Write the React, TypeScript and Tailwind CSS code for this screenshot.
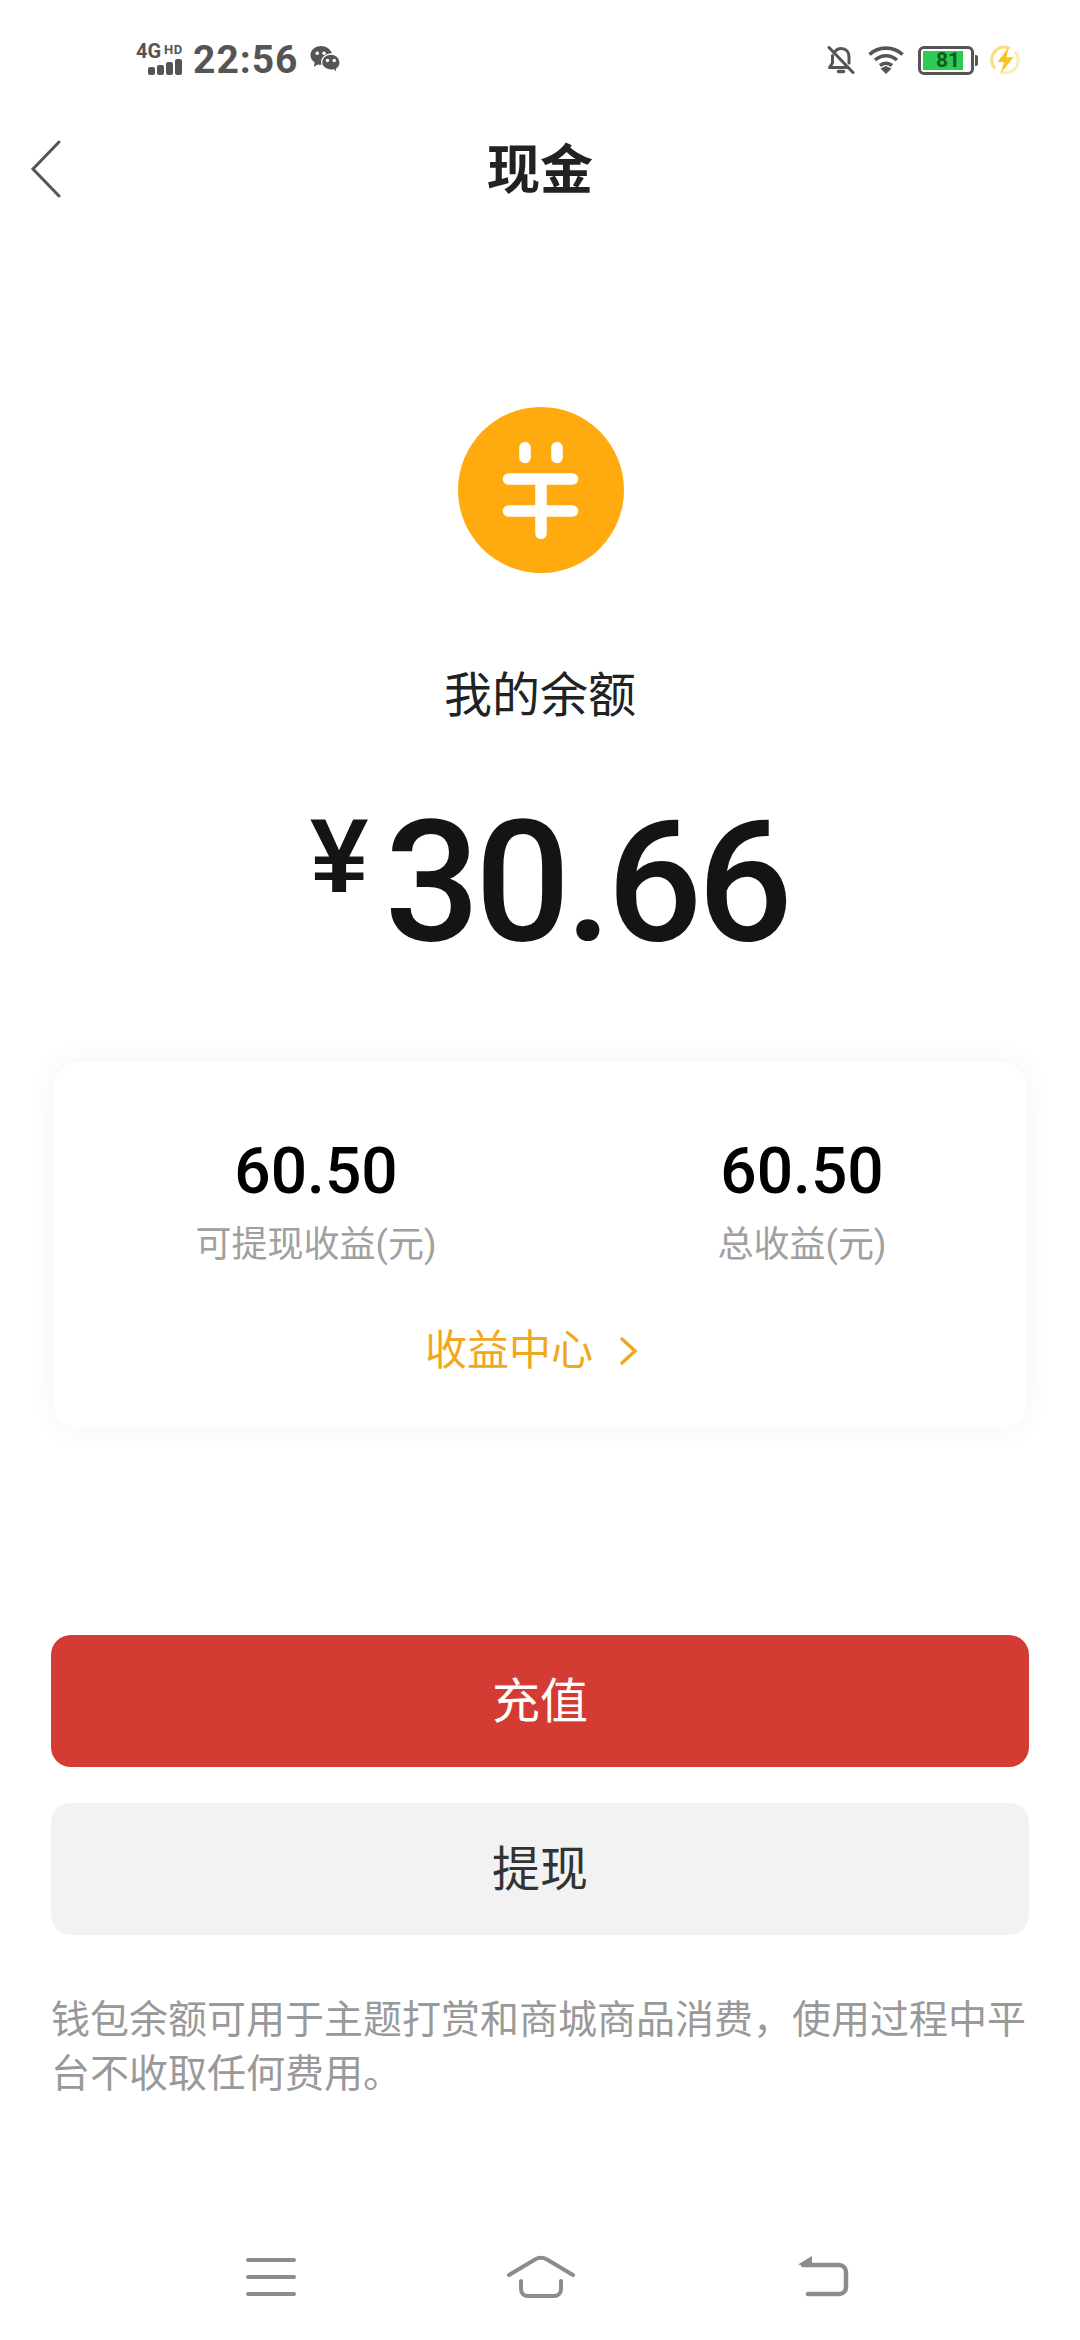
import React from "react";

const Wechat = () => (
  <svg width="32" height="31" viewBox="0 0 32 32" fill="#555">
    <path d="M12 1C5.800 1 1 5.200 1 10.500c0 3 1.700 5.600 4.300 7.400L4.500 22.500l4.200-2.400c1 .3 2.100.4 3.300.4.400 0 .8 0 1.200-.1-.3-.9-.5-1.800-.5-2.700 0-5 4.500-8.800 10-8.800h.7C21.500 4 17.100 1 12 1z" />
    <path d="M22 9.500c-5.200 0-9.500 3.600-9.500 8.200s4.300 8.200 9.500 8.200c1 0 1.900-.1 2.700-.4L28.500 29l-.7-4.300c2.300-1.500 3.700-4 3.700-7 0-4.600-4.300-8.200-9.500-8.200z" stroke="#fff" strokeWidth="1.200" />
    <circle cx="8" cy="8.500" r="1.800" fill="#fff" />
    <circle cx="15" cy="8.500" r="1.800" fill="#fff" />
    <circle cx="18.500" cy="16" r="1.800" fill="#fff" />
    <circle cx="25.500" cy="16" r="1.800" fill="#fff" />
  </svg>
);

const BellOff = () => (
  <svg width="28" height="28" viewBox="0 0 28 28" fill="none" stroke="#555" strokeWidth="3" strokeLinecap="round" strokeLinejoin="round">
    <path d="M8.500 5C10 3.200 11.800 2.500 14 2.500c5 0 8 3.500 8 8.500v6" />
    <path d="M5.500 9.500V17L2.500 21.500H20" />
    <path d="M2 1.500L26 26.500" />
    <path d="M11.500 25.500h5" strokeWidth="3.500" />
  </svg>
);

const Wifi = () => (
  <svg width="36" height="28" viewBox="0 0 36 28" fill="none" stroke="#555" strokeWidth="3.600">
    <path d="M1.500 8.500C10.500 0 25.500 0 34.500 8.500" />
    <path d="M7 14C13.500 8.300 22.500 8.300 29 14" />
    <path d="M12 19.500c3.500-2.900 8.500-2.900 12 0" />
    <path d="M12.500 22.500L18 20l5.500 2.500L18 28z" fill="#555" stroke="none" />
  </svg>
);

const Bolt = () => (
  <svg width="30" height="30" viewBox="0 0 32 32" fill="none">
    <path d="M21 3.500A13.500 13.500 0 0 0 5.500 25" stroke="#fbdf88" strokeWidth="3.500" />
    <path d="M11 28.500A13.500 13.500 0 0 0 26.500 7" stroke="#fdeeb8" strokeWidth="3.500" />
    <path d="M20 2L8 18h7l-3.500 12L25 13h-7.500z" fill="#fac31e" />
  </svg>
);

export default function App() {
  return (
    <div className="flex h-[2340px] w-[1080px] flex-col overflow-hidden bg-white font-['Roboto','Noto_Sans_CJK_SC',sans-serif]">
      {/* status bar */}
      <div className="flex h-[120px] items-center justify-between pl-[136px] pr-[60px]">
        <div className="flex items-center text-[#555]">
          <div className="flex h-[32px] w-[48px] flex-col">
            <div className="flex items-start text-[20px] font-bold leading-[15px]">
              <span>4G</span>
              <span className="ml-[3px] text-[13px] leading-[11px] tracking-[0.500px]">HD</span>
            </div>
            <div className="ml-[12px] flex items-end gap-[2px]">
              <span className="h-[8px] w-[7px] rounded-[2px] bg-[#555]" />
              <span className="h-[10px] w-[7px] rounded-[2px] bg-[#555]" />
              <span className="h-[13px] w-[7px] rounded-[2px] bg-[#555]" />
              <span className="h-[16px] w-[7px] rounded-[2px] bg-[#555]" />
            </div>
          </div>
          <span className="ml-[9px] text-[39px] font-bold leading-[48px] tracking-[1px]">22:56</span>
          <span className="ml-[10px] flex"><Wechat /></span>
        </div>
        <div className="flex items-center">
          <BellOff />
          <span className="ml-[13px] flex"><Wifi /></span>
          <span className="ml-[14px] flex items-center">
            <span className="flex h-[29px] w-[56px] items-stretch rounded-[6px] border-[3px] border-[#555] p-[2px]">
              <span className="flex w-[40px] items-center justify-end bg-[#2dcb51] pr-[3px] text-[21px] font-bold leading-none text-[#14591f]">81</span>
            </span>
            <span className="ml-[1px] h-[11px] w-[3px] rounded-r-[2px] bg-[#555]" />
          </span>
          <span className="ml-[12px] flex"><Bolt /></span>
        </div>
      </div>

      {/* header */}
      <div className="relative flex h-[100px] items-center justify-center pt-[2px]">
        <svg className="absolute left-[30px] top-[20px]" width="32" height="58" viewBox="0 0 32 58" fill="none" stroke="#555" strokeWidth="3" strokeLinecap="round">
          <path d="M29 2L3 29l26 27" />
        </svg>
        <span className="text-[53px] font-bold leading-[60px] text-[#222]">现金</span>
      </div>

      {/* coin */}
      <div className="ml-[2px] mt-[187px] flex justify-center">
        <div className="flex h-[166px] w-[166px] items-center justify-center rounded-full bg-[#ffab0f]">
          <svg width="86" height="106" viewBox="0 0 86 106" fill="none" stroke="#fff" strokeWidth="11.500" strokeLinecap="round">
            <path d="M27 10.500v10M59 10.500v10M10.500 42h64M10.500 74h64M43 42v54.500" />
          </svg>
        </div>
      </div>

      <div className="mt-[93px] text-center text-[48px] leading-[60px] text-[#222]">我的余额</div>

      {/* amount */}
      <div className="mt-[62px] flex h-[190px] items-start justify-center pl-[18px] text-[#141414]">
        <span className="mt-[18px] font-['Liberation_Sans'] text-[105px] font-bold leading-[100px]">¥</span>
        <span className="ml-[16px] text-[168px] font-medium leading-[190px] tracking-[-5px]">30.66</span>
      </div>

      {/* card */}
      <div className="mx-[54px] mt-[84px] flex h-[366px] flex-col rounded-[24px] bg-white shadow-[0_0_30px_rgba(0,0,0,0.05)]">
        <div className="mt-[74px] flex gap-[186px] pl-[112px]">
          <div className="flex w-[300px] flex-col items-center">
            <span className="text-[64px] font-medium leading-[72px] text-black">60.50</span>
            <span className="mt-[13px] text-[36px] leading-[48px] text-[#a0a0a0]">可提现收益(元)</span>
          </div>
          <div className="flex w-[300px] flex-col items-center">
            <span className="text-[64px] font-medium leading-[72px] text-black">60.50</span>
            <span className="mt-[13px] text-[36px] leading-[48px] text-[#a0a0a0]">总收益(元)</span>
          </div>
        </div>
        <div className="mt-[56px] flex items-center justify-center pr-[16px]">
          <span className="text-[42px] leading-[52px] text-[#f0a81e]">收益中心</span>
          <svg className="ml-[26px]" width="20" height="30" viewBox="0 0 20 30" fill="none" stroke="#f0a81e" strokeWidth="3.500" strokeLinecap="round">
            <path d="M3 3l13 12L3 27" />
          </svg>
        </div>
      </div>

      {/* buttons */}
      <div className="mx-[51px] mt-[207px] flex h-[132px] items-center justify-center rounded-[20px] bg-[#d43c33] pt-[2px] text-[48px] text-white">充值</div>
      <div className="mx-[51px] mt-[36px] flex h-[132px] items-center justify-center rounded-[20px] bg-[#f2f2f2] pt-[2px] text-[48px] text-[#333]">提现</div>

      <p className="mx-[51px] mt-[58px] text-[39px] leading-[54px] text-[#999]">
        钱包余额可用于主题打赏和商城商品消费，使用过程中平台不收取任何费用。
      </p>

      {/* nav bar */}
      <div className="mt-[154px] flex h-[50px] items-start pl-[246px]">
        <svg className="mt-[3px]" width="50" height="38" viewBox="0 0 50 38" fill="none" stroke="#8c8c8c" strokeWidth="4" strokeLinecap="round">
          <path d="M2 2h46M2 19h46M2 36h46" />
        </svg>
        <svg className="ml-[210px]" width="70" height="44" viewBox="0 0 70 44" fill="none" stroke="#8c8c8c" strokeWidth="4" strokeLinecap="round" strokeLinejoin="round">
          <path d="M3 20L29 4.500c4-2.200 8-2.200 12 0L67 20" />
          <path d="M15 26v8c0 4 3 7 7 7h26c4 0 7-3 7-7v-8" />
        </svg>
        <svg className="ml-[221px]" width="54" height="44" viewBox="0 0 54 44" fill="none" stroke="#8c8c8c" strokeWidth="4.500" strokeLinecap="round" strokeLinejoin="round">
          <path d="M6 10h36c4 0 7 3 7 7v15c0 4-3 7-7 7H11" />
          <path d="M1 9.500L15 1v11z" fill="#8c8c8c" stroke="none" />
        </svg>
      </div>
    </div>
  );
}
